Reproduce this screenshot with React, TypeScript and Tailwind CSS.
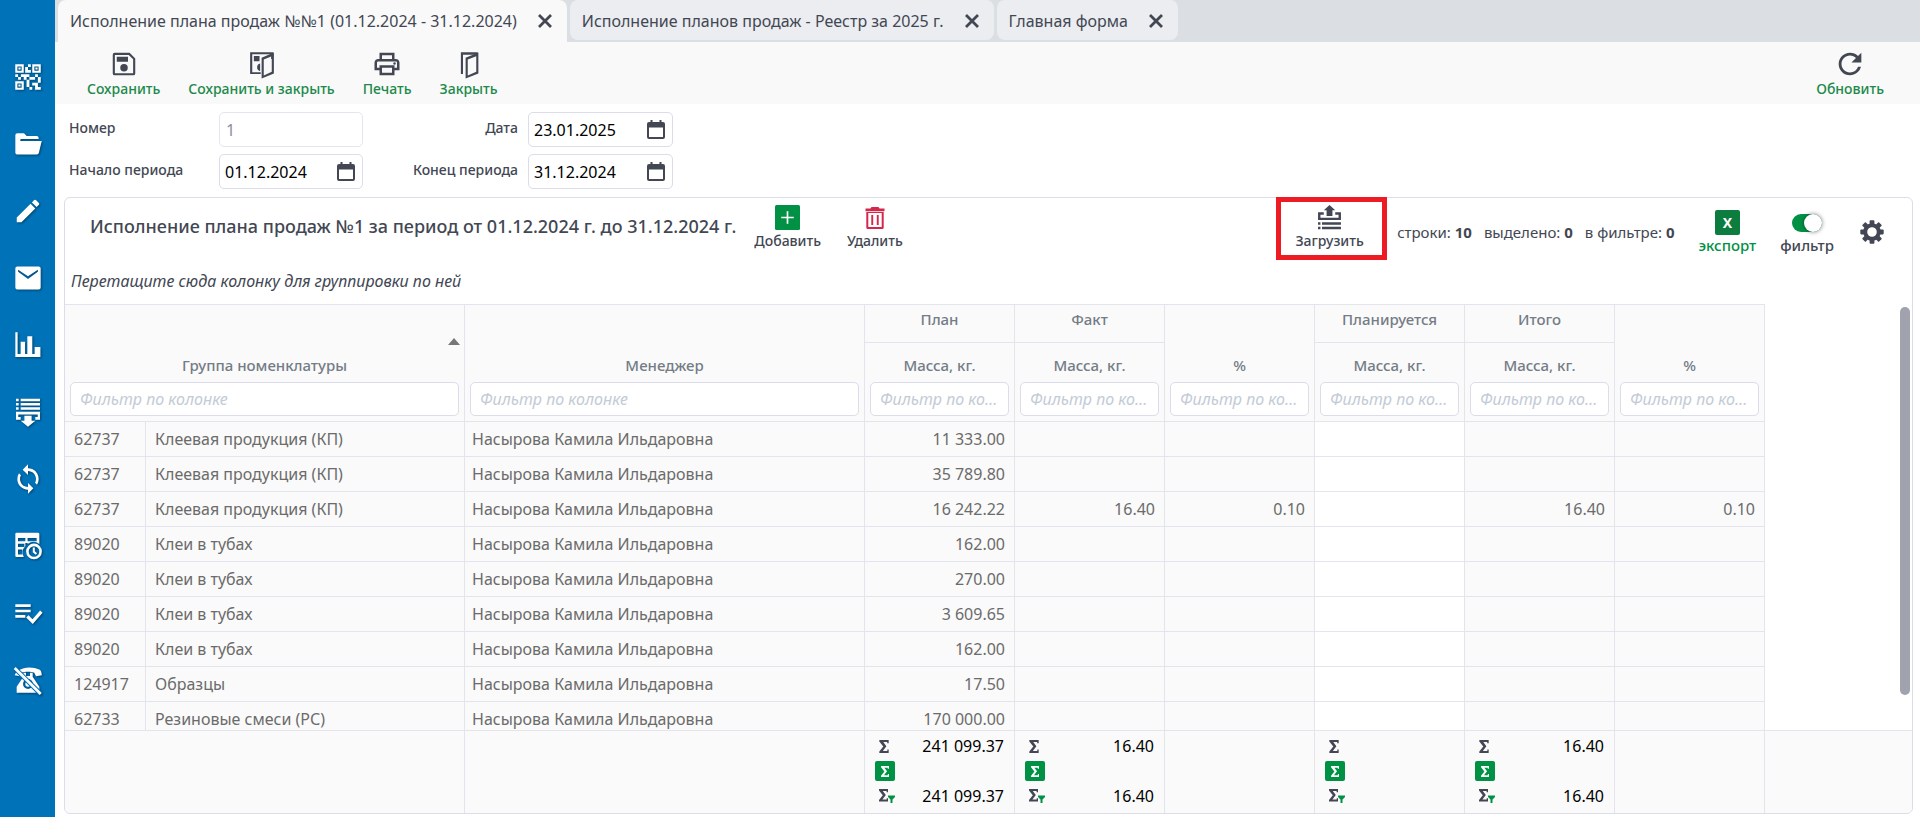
import { useState } from "react";
import type { ReactNode } from "react";
import { MdQrCode2, MdEdit, MdSync, MdOutlinePrint, MdRefresh } from "react-icons/md";

const INK = "text-[#424753]";

function Svg({ children, className = "size-[30px]", box = "0 0 24 24" }: { children: ReactNode; className?: string; box?: string }) {
  return (
    <svg viewBox={box} className={className} fill="currentColor" aria-hidden="true">
      {children}
    </svg>
  );
}

const FolderIcon = () => (
  <Svg className="size-8"><path d="M2.500 19V5.500a1.500 1.500 0 0 1 1.500-1.500h5l2 2h7.500a1.500 1.500 0 0 1 1.500 1.500v.700H6.500L4.300 17.500l1.700-7.800H22.300l-2.200 9a1.500 1.500 0 0 1-1.500 1.100H3.500z" /></Svg>
);
const MailIcon = () => (
  <Svg className="size-8"><path fillRule="evenodd" d="M4 3.300h16a1.500 1.500 0 0 1 1.500 1.500v14.400a1.500 1.500 0 0 1-1.500 1.500H4a1.500 1.500 0 0 1-1.500-1.500V4.800A1.500 1.500 0 0 1 4 3.300zM12 10.600 4.600 5.800v1.500L12 12.800l7.400-5.500V5.800z" /></Svg>
);
const ChartIcon = () => (
  <Svg className="size-8"><path d="M2.500 2.500h1.700v16.300H6.500V9.500h3.300v9.300h1.700V5.500h3.700v13.300H17V13.500h4.300v7.500H2.500z" /></Svg>
);
const UnloadIcon = () => (
  <Svg className="size-8"><path d="M3 2h2v1.900H3zM6.500 2H21v1.900H6.500zM3 5.200h2v1.900H3zM6.500 5.200H21v1.900H6.500zM3 8.400h2v1.900H3zM6.500 8.400H21v1.900H6.500zM3 11.800h18v6h-3.500v-2h1.800v-2H4.700v2h1.800v2H3zM9.300 14.800h5.400v3.700h2.800L12 23l-5.500-4.500h2.800z" /></Svg>
);
const TableClockIcon = () => (
  <Svg className="size-8">
    <path fillRule="evenodd" d="M3.500 2h16a1 1 0 0 1 1 1v7.500a7.500 7.500 0 0 0-8.800 0V9.800h-1.700v2.200a7.500 7.500 0 0 0-1.200 8.300h-5.300a1 1 0 0 1-1-1V3a1 1 0 0 1 1-1zm1 4v2.500h5.500V6zm7.200 0v2.500h6.800V6zM4.500 10.300v2.500h4.800v-2.500zm0 4.300v3.700h3.300v-3.700z" />
    <path fillRule="evenodd" d="M16.500 10.200a5.900 5.900 0 1 1 0 11.800 5.900 5.900 0 0 1 0-11.800zm0 1.900a4 4 0 1 0 0 8 4 4 0 0 0 0-8zm-.9 1.100h1.500v2.700l1.700 1.500-1 1.200-2.200-2z" />
  </Svg>
);
const ChecklistIcon = () => (
  <Svg className="size-8">
    <path d="M2.500 5.500H14v2H2.500zM2.500 9.500H14v2H2.500zM2.500 13.500h7.500v2H2.500z" />
    <path fill="none" stroke="currentColor" strokeWidth="2.400" d="M11.500 14.500 15.500 18.500 22 11" />
  </Svg>
);
const PhoneOffIcon = () => (
  <Svg className="size-9">
    <path d="M3.500 5.500C9 1.800 15.500 1.800 20.500 4.200c1.200.6 1.800 2 1.800 4.300l-4.300.7-1.300-2.700c-2.500-1-7-1-9.500 0L6 9.200 2 8.500z" />
    <path fillRule="evenodd" d="M8.500 6.500h2V9h3V6.500h2V9.500L20.500 17v4.500h-17V17L8.500 9.500zM12 11.300a3.700 3.700 0 1 0 0 7.400 3.700 3.700 0 0 0 0-7.400zm0 1.700a2 2 0 1 1 0 4 2 2 0 0 1 0-4z" />
    <path fill="none" stroke="#0072b8" strokeWidth="3.600" d="M3 4 21.500 22.500" />
    <path fill="none" stroke="currentColor" strokeWidth="2" d="M2 3 21.500 22.500" />
  </Svg>
);
const SaveIcon = () => (
  <Svg><path fillRule="evenodd" d="M3 4.500A1.500 1.500 0 0 1 4.500 3h12L21 7.500v12a1.500 1.500 0 0 1-1.500 1.500h-15A1.500 1.500 0 0 1 3 19.500zM4.700 4.700v14.600h14.600V8.200L15.800 4.700zM6.200 6.200h9v4h-9zM12 12a3 3 0 1 1 0 6 3 3 0 0 1 0-6z" /></Svg>
);
const SaveCloseIcon = () => (
  <Svg>
    <path d="M2.500 2.500H21V8h-1.700V4.200H4.200v14.300H11V20H2.500z" />
    <path fillRule="evenodd" d="M11.700 7 21.500 2.800V19.500L11.700 23.500zM13.400 8.300v12.800l6.400-3V5.700z" />
    <path d="M5.500 5.500h4.500v4.300H5.500zM10.500 11.500v6.200a3.200 3.200 0 0 1 0-6.200z" />
  </Svg>
);
const DoorIcon = () => (
  <Svg>
    <path d="M5.500 2.500H19v2H7.200V20H5.500z" />
    <path fillRule="evenodd" d="M9.300 7 19.500 2.800V19.500L9.300 23.500zM11 8.300v12.800l6.800-3V5.700z" />
  </Svg>
);
const AddIcon = () => (
  <Svg className="size-[25px] text-[#009145]"><rect width="24" height="24" rx="1.500" /><path fill="#fff" d="M11.200 6h1.600v5.200H18v1.600h-5.200V18h-1.600v-5.200H6v-1.600h5.200z" /></Svg>
);
const TrashIcon = () => (
  <Svg className="size-6 text-[#d5264e]"><path fillRule="evenodd" d="M8.500 1h7l1 1.500h5V5.200h-19V2.500h5zM3.300 6h17.400v15.500a1.500 1.500 0 0 1-1.500 1.500H4.800a1.500 1.500 0 0 1-1.500-1.500zM5.300 7v14h13.400V7zM8.300 9h1.900v10H8.300zM13.800 9h1.900v10h-1.900z" /></Svg>
);
const LoadIcon = () => (
  <Svg className="size-[25px]"><path d="M12 0l5.500 5H14.800v5.500H9.200V5H6.500zM1 7h5.500v2.300H3.300v2.900h17.400V9.300h-3.200V7H23v7.500H1zM1 16.500h2.300v2.400H1zM4.800 16.500H23v2.400H4.800zM1 20.900h2.300v2.400H1zM4.800 20.900H23v2.400H4.800z" /></Svg>
);
const CalendarIcon = () => (
  <Svg className="h-5 w-[18px]" box="0 0 18 20"><path fillRule="evenodd" d="M3.500 0h2v2h7V0h2v2H16a2 2 0 0 1 2 2v13a2 2 0 0 1-2 2H2a2 2 0 0 1-2-2V4a2 2 0 0 1 2-2h1.500zM2 7.500v9.500h14V7.500z" /></Svg>
);
const GearIcon = () => (
  <Svg className="size-6">
    <circle cx="12" cy="12" r="6.800" fill="none" stroke="currentColor" strokeWidth="4" />
    {[0, 45, 90, 135, 180, 225, 270, 315].map((a) => (
      <rect key={a} x="9.600" y="0.300" width="4.800" height="4.500" rx="0.800" transform={`rotate(${a} 12 12)`} />
    ))}
  </Svg>
);

const nav: { label: string; icon: ReactNode }[] = [
  { label: "QR", icon: <MdQrCode2 className="size-[34px] shrink-0" /> },
  { label: "Документы", icon: <FolderIcon /> },
  { label: "Правка", icon: <MdEdit className="size-[30px]" /> },
  { label: "Почта", icon: <MailIcon /> },
  { label: "Отчёты", icon: <ChartIcon /> },
  { label: "Выгрузка", icon: <UnloadIcon /> },
  { label: "Обмен", icon: <MdSync className="size-8" /> },
  { label: "Расписание", icon: <TableClockIcon /> },
  { label: "Задачи", icon: <ChecklistIcon /> },
  { label: "Звонки", icon: <PhoneOffIcon /> },
];

function Tab({ title, active = false }: { title: string; active?: boolean }) {
  return (
    <div className={active ? "flex h-[42px] items-center gap-[18px] rounded-t-lg bg-[#f9f9f9] px-3" : "flex h-[40px] items-center gap-[18px] rounded-lg bg-[#ebedf0] px-3 pt-0.5"}>
      <a href="#" className="whitespace-nowrap">{title}</a>
      <button type="button" aria-label="Закрыть вкладку" className="flex size-5 items-center justify-center">
        <svg viewBox="0 0 14 14" className="size-[14px]" fill="none" stroke="currentColor" strokeWidth="2.800" aria-hidden="true">
          <path d="M1 1l12 12M13 1L1 13" />
        </svg>
      </button>
    </div>
  );
}

function ToolButton({ label, icon, green = true }: { label: string; icon: ReactNode; green?: boolean }) {
  return (
    <button type="button" className="flex flex-col items-center gap-[3px] whitespace-nowrap">
      <span className={green ? "flex h-7 items-center text-[#424753]" : "flex h-[25px] items-center text-[#424753]"}>{icon}</span>
      <span className={green ? "text-sm leading-4 font-medium text-[#20894a]" : "text-sm leading-4 font-medium"}>{label}</span>
    </button>
  );
}

function DateField({ id, value }: { id: string; value: string }) {
  return (
    <div className="flex h-[35px] items-center rounded-[5px] border border-[#dcdcea] pr-[7px] pl-[5px] text-base font-normal">
      <input id={id} defaultValue={value} className="w-full min-w-0 text-black outline-none" />
      <button type="button" aria-label="Открыть календарь"><CalendarIcon /></button>
    </div>
  );
}

function FilterInput({ column }: { column: string }) {
  return (
    <input
      aria-label={"Фильтр: " + column}
      placeholder="Фильтр по колонке"
      className="block h-[34px] w-full rounded-[5px] border border-[#dcdcea] bg-white px-[9px] text-base font-normal text-ellipsis italic outline-none placeholder:text-[#c3cbd6]"
    />
  );
}

const MANAGER = "Насырова Камила Ильдаровна";
const rows: string[][] = [
  ["62737", "Клеевая продукция (КП)", "11 333.00", "", ""],
  ["62737", "Клеевая продукция (КП)", "35 789.80", "", ""],
  ["62737", "Клеевая продукция (КП)", "16 242.22", "16.40", "0.10"],
  ["89020", "Клеи в тубах", "162.00", "", ""],
  ["89020", "Клеи в тубах", "270.00", "", ""],
  ["89020", "Клеи в тубах", "3 609.65", "", ""],
  ["89020", "Клеи в тубах", "162.00", "", ""],
  ["124917", "Образцы", "17.50", "", ""],
  ["62733", "Резиновые смеси (РС)", "170 000.00", "", ""],
];

const totals: { sums: boolean; value: string }[] = [
  { sums: true, value: "241 099.37" },
  { sums: true, value: "16.40" },
  { sums: false, value: "" },
  { sums: true, value: "" },
  { sums: true, value: "16.40" },
  { sums: false, value: "" },
];

const line = "border-[#e4e5ec]";

function Columns({ rest = false }: { rest?: boolean }) {
  return (
    <colgroup>
      <col className="w-[81px]" />
      <col className="w-[319px]" />
      <col className="w-[400px]" />
      <col className="w-[150px]" />
      <col className="w-[150px]" />
      <col className="w-[150px]" />
      <col className="w-[150px]" />
      <col className="w-[150px]" />
      <col className="w-[150px]" />
      {rest && <col />}
    </colgroup>
  );
}

function GroupHead({ title }: { title: string }) {
  return <th className={"h-[38px] border-r border-b pb-2.5 font-medium " + line}>{title}</th>;
}

function LeafHead({ title }: { title: string }) {
  return <th className={"h-[35px] border-r pb-[3px] align-bottom font-medium " + line}>{title}</th>;
}

function TallHead({ title }: { title: string }) {
  return (
    <th rowSpan={2} className={"border-r pb-[3px] align-bottom font-medium " + line}>
      {title}
    </th>
  );
}

function FilterCell({ column, span = 1 }: { column: string; span?: number }) {
  return (
    <td colSpan={span} className={"h-[44px] border-r border-b px-[5px] pt-1 align-top " + line}>
      <FilterInput column={column} />
    </td>
  );
}

function Grid() {
  const num = "h-[35px] border-r border-b pr-[9px] text-right " + line;
  return (
    <table className={"w-[1700px] table-fixed border-separate border-spacing-0 border-t bg-[#fafafa] text-base leading-6 text-[#6b6b6b] " + line}>
      <Columns />
      <thead className="text-[15px] leading-5 text-[#747c86]">
        <tr>
          <th rowSpan={2} colSpan={2} className={"border-r pb-[3px] align-bottom font-medium " + line}>
            <div className="flex justify-end pr-1 pb-[10px]">
              <svg viewBox="0 0 12 7" className="h-[7px] w-3 fill-[#777]" aria-hidden="true"><path d="M6 0l6 7H0z" /></svg>
            </div>
            Группа номенклатуры
          </th>
          <TallHead title="Менеджер" />
          <GroupHead title="План" />
          <GroupHead title="Факт" />
          <TallHead title="%" />
          <GroupHead title="Планируется" />
          <GroupHead title="Итого" />
          <TallHead title="%" />
        </tr>
        <tr>
          <LeafHead title="Масса, кг." />
          <LeafHead title="Масса, кг." />
          <LeafHead title="Масса, кг." />
          <LeafHead title="Масса, кг." />
        </tr>
        <tr>
          <FilterCell column="Группа номенклатуры" span={2} />
          <FilterCell column="Менеджер" />
          <FilterCell column="План" />
          <FilterCell column="Факт" />
          <FilterCell column="Процент факта" />
          <FilterCell column="Планируется" />
          <FilterCell column="Итого" />
          <FilterCell column="Процент итога" />
        </tr>
      </thead>
      <tbody>
        {rows.map((r, i) => (
          <tr key={i}>
            <td className={"h-[35px] border-r border-b pl-[9px] " + line}>{r[0]}</td>
            <td className={"border-r border-b pl-[9px] " + line}>{r[1]}</td>
            <td className={"border-r border-b pl-[7px] " + line}>{MANAGER}</td>
            <td className={num}>{r[2]}</td>
            <td className={num}>{r[3]}</td>
            <td className={num}>{r[4]}</td>
            <td className={num + " bg-white"} />
            <td className={num}>{r[3]}</td>
            <td className={num}>{r[4]}</td>
          </tr>
        ))}
      </tbody>
    </table>
  );
}

const SIGMA = "M0 0h9v3.200H7.600V2H3.800L6.800 6 3.400 10.500h4.300V9.200H9V12.500H0v-1.500L3.800 6.200 0 1.500z";

function Totals() {
  return (
    <table className={"w-full table-fixed border-separate border-spacing-0 border-t bg-[#fafafa] text-base text-black " + line}>
      <Columns rest />
      <tbody>
        <tr>
          <td colSpan={2} className={"h-[82px] border-r " + line} />
          <td className={"border-r " + line} />
          {totals.map((t, i) => (
            <td key={i} className={"border-r pr-[10px] pl-[10px] align-top " + line}>
              {t.sums && (
                <div className="flex flex-col pt-[3px] text-[#424753]">
                  <div className="flex h-6 items-center justify-between">
                    <Svg className="ml-1 h-[13px] w-[10px]" box="0 0 9 12.5"><path d={SIGMA} /></Svg>
                    <span className="text-black">{t.value}</span>
                  </div>
                  <div className="flex h-[26px] items-center">
                    <button type="button" aria-label="Сумма по выделенным" className="flex h-[20px] w-5 items-center justify-center rounded-xs bg-[#009145] text-white">
                      <Svg className="h-[11px] w-2" box="0 0 9 12.5"><path d={SIGMA} /></Svg>
                    </button>
                  </div>
                  <div className="flex h-6 items-center justify-between">
                    <Svg className="ml-1 h-4 w-4" box="0 0 16 16">
                      <path d={SIGMA} transform="translate(0 1)" />
                      <path fill="#009145" d="M9 7.500h7v1.500l-2.500 2.500V15h-2v-3.500L9 9z" />
                    </Svg>
                    <span className="text-black">{t.value}</span>
                  </div>
                </div>
              )}
            </td>
          ))}
          <td />
        </tr>
      </tbody>
    </table>
  );
}

function Counter({ label, value }: { label: string; value: string }) {
  return <span>{label}: <b>{value}</b></span>;
}

export default function App() {
  const [filterOn, setFilterOn] = useState(true);
  return (
    <div className={"flex h-screen bg-white font-['Noto_Sans',sans-serif] text-base " + INK}>
      <nav className="flex w-[55px] shrink-0 flex-col items-center gap-[35px] bg-[#0072b8] pt-[61px] text-white">
        {nav.map((n) => (
          <a key={n.label} href="#" aria-label={n.label} className="flex size-8 items-center justify-center drop-shadow-[1px_1px_1px_rgba(0,0,0,0.4)]">
            {n.icon}
          </a>
        ))}
      </nav>

      <div className="flex min-w-0 flex-1 flex-col">
        <div className="flex h-[42px] shrink-0 items-start gap-[3px] bg-[#dbdee2] pl-[3px]">
          <Tab active title="Исполнение плана продаж №№1 (01.12.2024 - 31.12.2024)" />
          <Tab title="Исполнение планов продаж - Реестр за 2025 г." />
          <Tab title="Главная форма" />
        </div>

        <div className="flex h-[62px] shrink-0 items-start gap-7 bg-[#f9f9f9] pt-2 pr-9 pl-8">
          <ToolButton label="Сохранить" icon={<SaveIcon />} />
          <ToolButton label="Сохранить и закрыть" icon={<SaveCloseIcon />} />
          <ToolButton label="Печать" icon={<MdOutlinePrint className="size-[30px]" />} />
          <ToolButton label="Закрыть" icon={<DoorIcon />} />
          <div className="flex-1" />
          <ToolButton label="Обновить" icon={<MdRefresh className="size-[34px]" />} />
        </div>

        <form className="grid shrink-0 grid-cols-[150px_144px_165px_145px] gap-y-[7px] pt-2 pl-[14px] text-sm font-medium">
          <label htmlFor="number" className="pt-1.5">Номер</label>
          <input id="number" disabled defaultValue="1" className="h-[35px] w-full rounded-[5px] border border-[#e4e5ee] px-1.5 text-base font-normal text-[#8b8f96]" />
          <label htmlFor="date" className="pt-1.5 pr-[10px] text-right">Дата</label>
          <DateField id="date" value="23.01.2025" />
          <label htmlFor="from" className="pt-1.5">Начало периода</label>
          <DateField id="from" value="01.12.2024" />
          <label htmlFor="to" className="pt-1.5 pr-[10px] text-right">Конец периода</label>
          <DateField id="to" value="31.12.2024" />
        </form>

        <section className="mt-2 mr-[7px] mb-[3px] ml-[9px] flex min-h-0 flex-1 flex-col rounded-md border border-[#dcdcea]">
          <header className="flex h-[62px] shrink-0 items-start">
            <h1 className="pt-4 pl-[25px] text-lg leading-6 font-medium whitespace-nowrap">
              Исполнение плана продаж №1 за период от 01.12.2024 г. до 31.12.2024 г.
            </h1>
            <div className="flex gap-[26px] pt-[7px] pl-[18px]">
              <ToolButton green={false} label="Добавить" icon={<AddIcon />} />
              <ToolButton green={false} label="Удалить" icon={<TrashIcon />} />
            </div>
            <div className="flex-1" />
            <div className="-mt-px flex h-[63px] w-[111px] justify-center border-5 border-[#ed1c24] pt-[3px] pr-1">
              <ToolButton green={false} label="Загрузить" icon={<LoadIcon />} />
            </div>
            <div className="flex gap-3 pt-6 pl-[10px] text-[15px] leading-5 whitespace-nowrap">
              <Counter label="строки" value="10" />
              <Counter label="выделено" value="0" />
              <Counter label="в фильтре" value="0" />
            </div>
            <button type="button" className="ml-6 flex flex-col items-center pt-3">
              <span className="flex h-[25px] w-[25px] items-center justify-center rounded-xs bg-[#0c7d3e] text-sm font-bold text-white">X</span>
              <span className="text-[15px] leading-5 font-medium text-[#009145]">экспорт</span>
            </button>
            <label className="ml-6 flex flex-col items-center pt-3 text-[15px] leading-5 font-medium">
              <span className="flex h-[25px] items-center">
                <input type="checkbox" checked={filterOn} onChange={(e) => setFilterOn(e.target.checked)} className="peer sr-only" />
                <span className="flex h-[18px] w-[30px] items-center rounded-full bg-gray-300 peer-checked:justify-end peer-checked:bg-[#009145]">
                  <span className="size-[18px] shrink-0 rounded-full bg-white shadow-[0_0_4px_rgba(0,0,0,0.5)]" />
                </span>
              </span>
              фильтр
            </label>
            <button type="button" aria-label="Настройки" className="mt-[22px] mr-7 ml-[26px]"><GearIcon /></button>
          </header>

          <p className="h-11 shrink-0 pt-[9px] pl-1.5 leading-6 italic">Перетащите сюда колонку для группировки по ней</p>

          <div className="relative min-h-0 flex-1 overflow-hidden">
            <Grid />
            <div className="absolute top-[3px] right-[2px] h-[388px] w-[10px] rounded-full bg-[#a0a2ad]" />
          </div>
          <div className="shrink-0 overflow-hidden rounded-b-md"><Totals /></div>
        </section>
      </div>
    </div>
  );
}
